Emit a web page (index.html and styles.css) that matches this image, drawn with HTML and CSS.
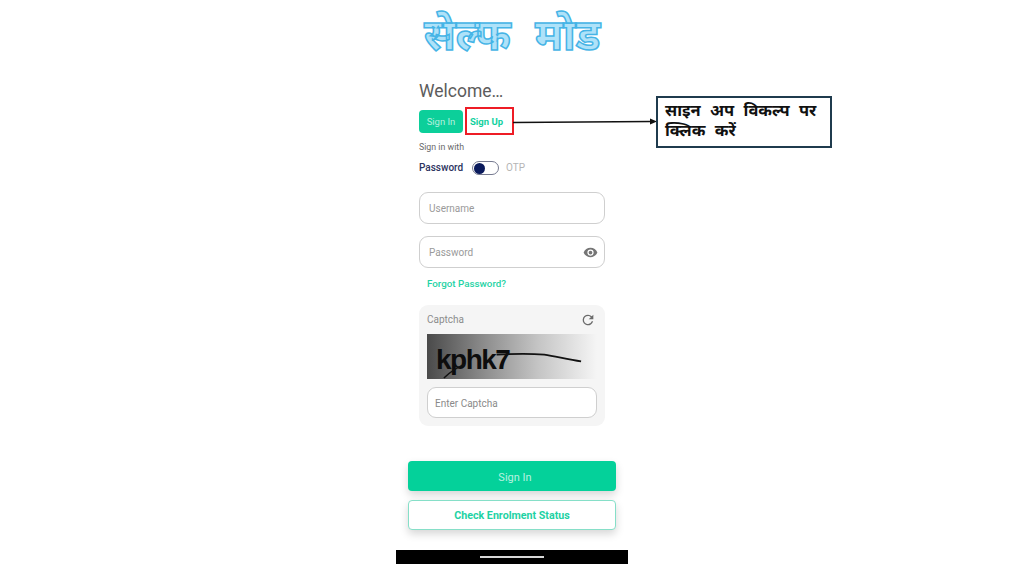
FILE: index.html
```html
<!DOCTYPE html>
<html lang="hi">
<head>
<meta charset="utf-8">
<title>Self Mode</title>
<link rel="stylesheet" href="styles.css">
</head>
<body>
<div class="slide">
  <main class="phone">
    <h1 class="title">सेल्फ मोड</h1>
    <section class="form">
      <h2 class="welcome">Welcome…</h2>
      <div class="tabs">
        <span class="tab active">Sign In</span>
        <span class="tab link">Sign Up</span>
      </div>
      <p class="with">Sign in with</p>
      <div class="mode">
        <span class="mode-on">Password</span>
        <span class="switch"><span class="knob"></span></span>
        <span class="mode-off">OTP</span>
      </div>
      <div class="field first"><span>Username</span></div>
      <div class="field second"><span>Password</span>
        <svg class="eye" viewBox="0 0 24 24" width="15" height="15"><path fill="#757575" d="M12 4.5C7 4.5 2.7 7.6 1 12c1.7 4.4 6 7.5 11 7.5s9.3-3.100 11-7.500C21.300 7.600 17 4.500 12 4.500zM12 17a5 5 0 1 1 0-10 5 5 0 0 1 0 10zm0-8a3 3 0 1 0 0 6 3 3 0 0 0 0-6z"/></svg>
      </div>
      <a class="forgot">Forgot Password?</a>
      <div class="captcha">
        <div class="captcha-head">
          <span>Captcha</span>
          <svg viewBox="0 0 24 24" width="16" height="16"><path fill="#6b6b6b" d="M17.650 6.350A7.960 7.960 0 0 0 12 4a8 8 0 1 0 7.730 10h-2.080A6 6 0 1 1 12 6c1.660 0 3.140.69 4.220 1.780L13 11h7V4l-2.350 2.350z"/></svg>
        </div>
        <div class="captcha-img">
          <span class="captcha-text">kphk7</span>
          <svg class="captcha-lines" viewBox="0 0 171 46" preserveAspectRatio="none"><path d="M17 45 C24 38 30 34 38 31" fill="none" stroke="#111" stroke-width="1.500"/><path d="M70 21 C90 20 105 20 118 21 C130 23 142 26 155 28" fill="none" stroke="#111" stroke-width="1.800"/></svg>
        </div>
        <div class="captcha-input">Enter Captcha</div>
      </div>
    </section>
    <div class="actions">
      <button class="primary">Sign In</button>
      <button class="secondary">Check Enrolment Status</button>
    </div>
    <div class="navbar"><span class="handle"></span></div>
  </main>
  <div class="highlight"></div>
  <svg class="arrow" viewBox="0 0 145 8" width="145" height="8"><path d="M0 4.500 L138 3.500" stroke="#111" stroke-width="1.300"/><path d="M144 3.500 L137 0.500 V6.500 Z" fill="#111"/></svg>
  <div class="callout">साइन अप विकल्प पर क्लिक करें</div>
</div>
</body>
</html>
```

FILE: styles.css
```css
* { box-sizing: border-box; }
html, body { margin: 0; padding: 0; background: #fff; }
body { font-family: Roboto, "Noto Sans", sans-serif; }
.slide { position: relative; width: 1024px; height: 576px; overflow: hidden; background: #fff; }
.phone { width: 232px; height: 564px; margin-left: 396px; display: flex; flex-direction: column; }
.title {
  margin: 0; height: 72px; padding: 9px 0 0 28px; white-space: pre; word-spacing: 13px;
  font: 700 43px/50px "Noto Sans", "Noto Sans Devanagari", sans-serif;
  color: #aee2f9; -webkit-text-stroke: 1.500px #45b4e6;
}
.form { padding: 0 23px; display: flex; flex-direction: column; }
.welcome { margin: 8px 0 0; font: 400 17.500px/23px Roboto, sans-serif; color: #5c5c5c; height: 27px; }
.tabs { display: flex; gap: 4px; margin-top: 3px; height: 23px; }
.tab { font: 400 9.500px/24px Roboto, sans-serif; border-radius: 4px; text-align: center; }
.tab.active { width: 44px; background: #0ccf9a; color: #b5f0de; }
.tab.link { width: 39px; color: #12d09e; font-weight: 700; }
.with { margin: 9px 0 0; font: 400 8.800px/11px Roboto, sans-serif; color: #6a6a6a; height: 11px; }
.mode { display: flex; align-items: center; margin-top: 8px; height: 14px; font: 10px/14px Roboto, sans-serif; }
.mode-on { color: #2c3360; font-weight: 500; width: 53px; }
.switch { width: 27px; height: 14px; border: 1px solid #767a90; border-radius: 7px; display: flex; align-items: center; padding-left: 1px; }
.knob { width: 11px; height: 11px; border-radius: 50%; background: #0a1a5c; }
.mode-off { color: #b5b5b5; margin-left: 7px; }
.field { height: 32px; border: 1.500px solid #cfcfcf; border-radius: 9px; padding: 0 9px; display: flex; align-items: center; justify-content: space-between; font: 10px Roboto, sans-serif; color: #9a9a9a; background: #fff; }
.field.first { margin-top: 17px; }
.field.second { margin-top: 12px; }
.eye { display: block; margin-right: -3px; }
.forgot { margin: 9px 0 0 8px; font: 500 9.800px/14px Roboto, sans-serif; color: #1fd3a5; height: 14px; }
.captcha { margin-top: 14px; height: 121px; background: #f5f5f5; border-radius: 9px; padding: 7px 8px 8px; display: flex; flex-direction: column; }
.captcha-head { display: flex; justify-content: space-between; align-items: center; height: 15px; font: 400 10px Roboto, sans-serif; color: #8c8c8c; }
.captcha-head svg { margin-right: 1px; }
.captcha-img { position: relative; height: 46px; margin-top: 7px; overflow: hidden; background: linear-gradient(90deg, #4a4a4a 0%, #8f8f8f 35%, #c4c4c4 65%, #f5f5f5 100%); }
.captcha-text { position: absolute; left: 9px; top: 8px; font: 700 28px/36px "Liberation Sans", sans-serif; letter-spacing: -1.500px; color: #0d0d0d; }
.captcha-lines { position: absolute; inset: 0; width: 100%; height: 100%; }
.captcha-input { height: 31px; margin-top: 8px; background: #fff; border: 1.500px solid #cfcfcf; border-radius: 9px; padding-left: 7px; font: 10px/31px Roboto, sans-serif; color: #8a8a8a; }
.actions { margin: 35px 12px 0; display: flex; flex-direction: column; gap: 9px; }
.primary, .secondary { display: block; width: 208px; height: 30px; border-radius: 4px; padding: 0; font-family: Roboto, sans-serif; font-size: 11px; box-shadow: 0 4px 8px rgba(0,0,0,.16); }
.primary { border: 0; background: #04d19a; color: #b8f1e0; padding: 2px 0 0 6px; }
.secondary { border: 1.500px solid #86dfc8; background: #fff; color: #1ed2a4; font-weight: 700; font-size: 10.700px; }
.navbar { margin-top: 20px; height: 14px; background: #000; display: flex; align-items: center; justify-content: center; }
.handle { width: 64px; height: 2px; background: #d8d8d8; }
.highlight { position: absolute; left: 465px; top: 107px; width: 49px; height: 28px; border: 2px solid #ee1c25; }
.arrow { position: absolute; left: 513px; top: 118px; display: block; }
.callout { position: absolute; left: 656px; top: 96px; width: 176px; height: 52px; border: 2px solid #1f3b4d; padding: 2px 7px; background: #fff; font: 700 16.500px/20px "Noto Sans", "Noto Sans Devanagari", sans-serif; color: #111; word-spacing: 5px; }
```
